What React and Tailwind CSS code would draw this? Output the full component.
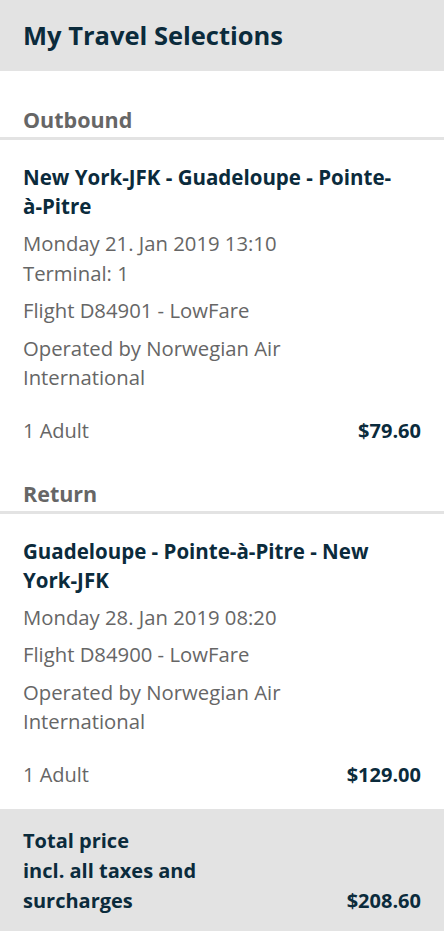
import React from 'react';

const navy = 'text-[#0b2b3c]';
const grey = 'text-[#666666]';

const legs = [
  {
    label: 'Outbound',
    route: (
      <>
        New York-JFK - Guadeloupe - Pointe-<span className="whitespace-nowrap">à-Pitre</span>
      </>
    ),
    lines: [['Monday 21. Jan 2019 13:10', 'Terminal: 1'], ['Flight D84901 - LowFare'], ['Operated by Norwegian Air International']],
    pax: '1 Adult',
    price: '$79.60',
  },
  {
    label: 'Return',
    route: 'Guadeloupe - Pointe-à-Pitre - New York-JFK',
    lines: [['Monday 28. Jan 2019 08:20'], ['Flight D84900 - LowFare'], ['Operated by Norwegian Air International']],
    pax: '1 Adult',
    price: '$129.00',
  },
];

const App = () => {
  return (
    <div className="w-[444px] min-h-[932px] bg-white font-['Open_Sans','Liberation_Sans',sans-serif]">
      {/* header */}
      <div className="h-[71px] bg-[#e3e3e3] px-[23px] flex items-center">
        <h1 className={`text-[25.5px] font-bold leading-none ${navy}`}>My Travel Selections</h1>
      </div>

      {legs.map((leg) => (
        <div key={leg.label}>
          <div className="mt-[35px] border-b-[3px] border-[#e3e3e3] px-[23px] pb-[3px]">
            <h2 className={`text-[21.5px] font-bold leading-[28px] ${grey}`}>{leg.label}</h2>
          </div>
          <div className="px-[23px] pt-[23px]">
            <h3 className={`text-[20.5px] font-bold leading-[29px] ${navy}`}>{leg.route}</h3>
            {leg.lines.map((group, i) => (
              <div key={i} className={`mt-[8px] text-[20.3px] leading-[29.5px] pr-[120px] ${grey}`}>
                {group.map((l) => (
                  <p key={l}>{l}</p>
                ))}
              </div>
            ))}
            <div className="mt-[23px] flex items-center justify-between text-[20px] leading-[29px]">
              <span className={grey}>{leg.pax}</span>
              <span className={`font-bold ${navy}`}>{leg.price}</span>
            </div>
          </div>
        </div>
      ))}

      {/* total */}
      <div className="mt-[20px] bg-[#e3e3e3] px-[23px] pt-[17px] pb-[15px] flex items-end justify-between">
        <p className={`text-[20px] font-bold leading-[30px] w-[200px] ${navy}`}>
          Total price
          <br />
          incl. all taxes and surcharges
        </p>
        <span className={`text-[20px] font-bold leading-[30px] ${navy}`}>$208.60</span>
      </div>
    </div>
  );
};

export default App;
